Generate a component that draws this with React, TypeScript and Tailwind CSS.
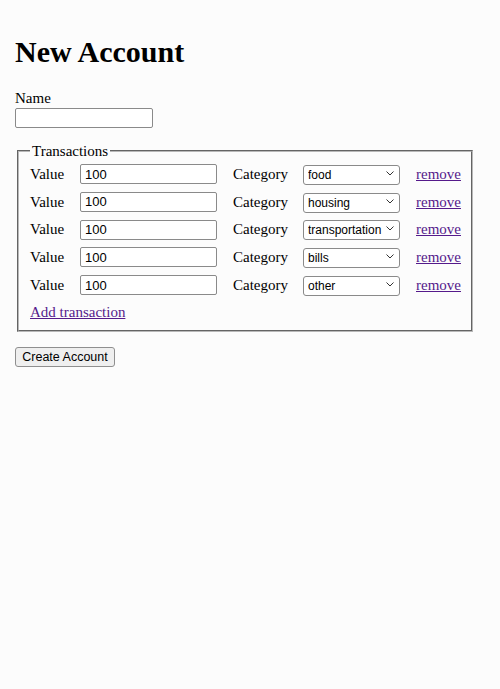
import { useState } from "react";

type Tx = { value: string; category: string };

const categories = ["food", "housing", "transportation", "bills", "other"];

function Chevron() {
  return (
    <svg width="8" height="5" viewBox="0 0 8 5" className="pointer-events-none absolute right-[6px] top-[8px]">
      <path d="M0.5 0.5 L4 4 L7.5 0.5" fill="none" stroke="#333" strokeWidth="1" />
    </svg>
  );
}

export default function App() {
  const [name, setName] = useState("");
  const [txs, setTxs] = useState<Tx[]>(categories.map((c) => ({ value: "100", category: c })));

  const update = (i: number, patch: Partial<Tx>) =>
    setTxs((prev) => prev.map((t, idx) => (idx === i ? { ...t, ...patch } : t)));

  return (
    <div className="min-h-[689px] bg-[#fcfcfc] pl-[15px] pt-[35px] font-['Liberation_Serif',serif] text-[15px] text-black">
      <h1 className="text-[30px] font-bold leading-[34px]">New Account</h1>

      <label className="mt-[20px] block leading-[18px]">Name</label>
      <input
        value={name}
        onChange={(e) => setName(e.target.value)}
        className="mt-[1px] block h-[20px] w-[138px] rounded-[2px] border border-[#8a8a8a] bg-white px-[3px] font-['Liberation_Sans',sans-serif] text-[13px] outline-none"
      />

      {/* Transactions */}
      <fieldset className="mt-[14px] ml-[2px] w-[456px] border-2 border-[#b8b8b8] pl-[11px] pb-[6px] [border-style:groove]">
        <legend className="px-[2px] leading-[18px]">Transactions</legend>
        <div className="mt-[4px] flex flex-col gap-[7.75px]">
          {txs.map((t, i) => (
            <div key={i} className="flex h-[20px] items-center">
              <span className="w-[50px]">Value</span>
              <input
                value={t.value}
                onChange={(e) => update(i, { value: e.target.value })}
                className="h-[20px] w-[137px] rounded-[2px] border border-[#8a8a8a] bg-white px-[4px] font-['Liberation_Sans',sans-serif] text-[13px] outline-none"
              />
              <span className="ml-[16px] w-[70px]">Category</span>
              <div className="relative">
                <select
                  value={t.category}
                  onChange={(e) => update(i, { category: e.target.value })}
                  className="h-[20px] w-[97px] appearance-none rounded-[3px] border border-[#8a8a8a] bg-white pl-[4px] pr-[12px] font-['Liberation_Sans',sans-serif] text-[12px] outline-none"
                >
                  {categories.map((c) => (
                    <option key={c} value={c}>
                      {c}
                    </option>
                  ))}
                </select>
                <Chevron />
              </div>
              <a
                href="#"
                onClick={(e) => {
                  e.preventDefault();
                  setTxs((prev) => prev.filter((_, idx) => idx !== i));
                }}
                className="ml-[16px] text-[#551a8b] underline"
              >
                remove
              </a>
            </div>
          ))}
        </div>
        <a
          href="#"
          onClick={(e) => {
            e.preventDefault();
            setTxs((prev) => [...prev, { value: "", category: "food" }]);
          }}
          className="mt-[8px] inline-block leading-[18px] text-[#551a8b] underline"
        >
          Add transaction
        </a>
      </fieldset>

      <button className="mt-[15px] block h-[20px] w-[100px] rounded-[3px] border border-[#8f8f8f] bg-[#efefef] font-['Liberation_Sans',sans-serif] text-[12.5px] leading-[18px]">
        Create Account
      </button>
    </div>
  );
}
